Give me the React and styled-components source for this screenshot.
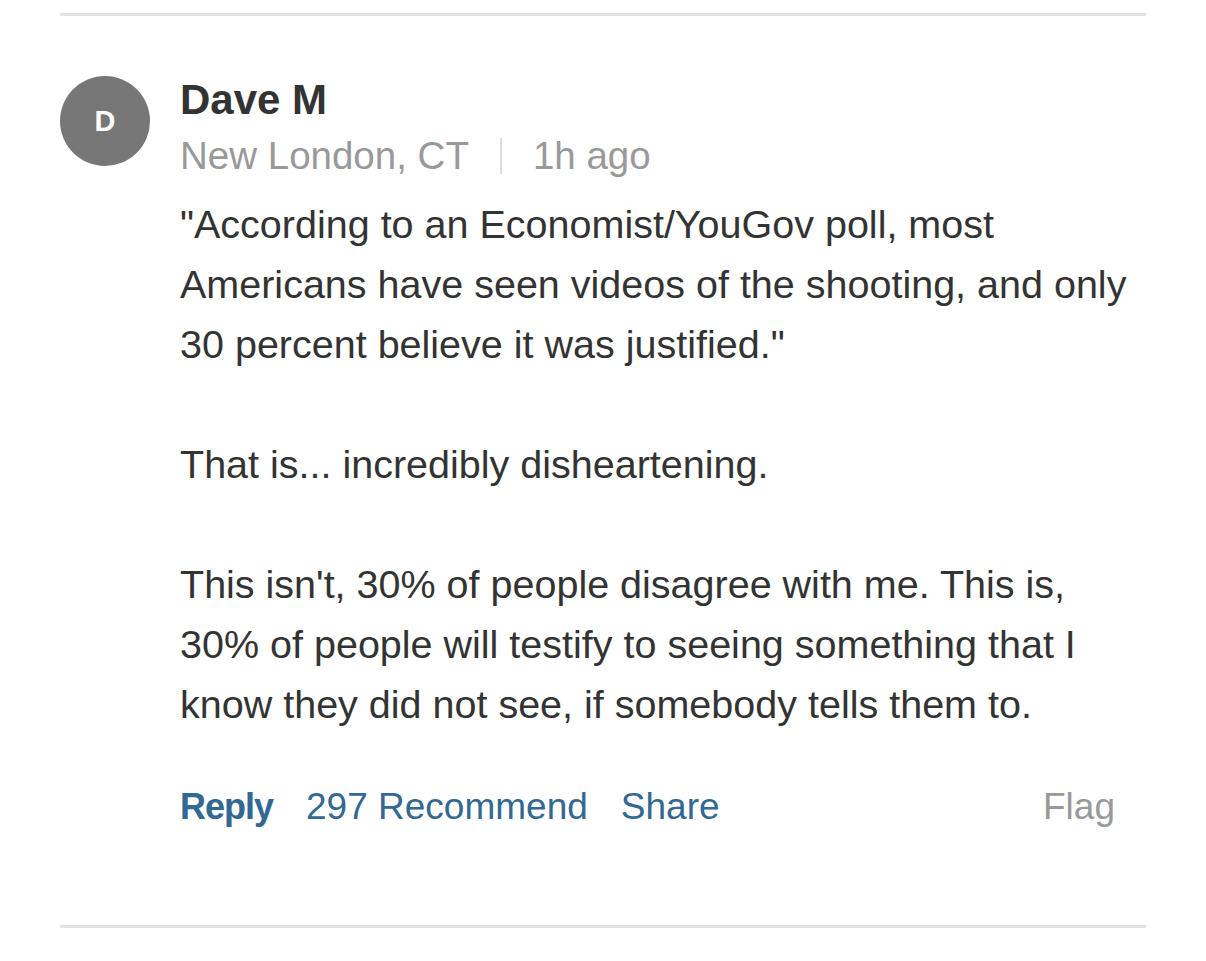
import styled, { createGlobalStyle } from "styled-components";

const GlobalStyle = createGlobalStyle`
  html, body {
    margin: 0;
    padding: 0;
    background: #fff;
  }
`;

const FONT = `"Liberation Sans", Arial, sans-serif`;

const App = () => {
  return (
    <>
      <GlobalStyle />
      <Page>
        <Comment>
          <Avatar>D</Avatar>
          <Main>
            <Name>Dave M</Name>
            <Meta>
              <span>New London, CT</span>
              <Divider />
              <span>1h ago</span>
            </Meta>
            <Body>
              <p>"According to an Economist/YouGov poll, most Americans have seen videos of the shooting, and only 30 percent believe it was justified."</p>
              <p>That is... incredibly disheartening.</p>
              <p>This isn't, 30% of people disagree with me. This is, 30% of people will testify to seeing something that I know they did not see, if somebody tells them to.</p>
            </Body>
            <Actions>
              <Action bold>Reply</Action>
              <Action>297 Recommend</Action>
              <Action>Share</Action>
              <Flag>Flag</Flag>
            </Actions>
          </Main>
        </Comment>
      </Page>
    </>
  );
};

const Page = styled.div`
  width: 1086px;
  margin: 0 0 0 60px;
  padding-top: 13px;
  font-family: ${FONT};
`;

const Comment = styled.div`
  border-top: 3px solid #e2e2e2;
  border-bottom: 3px solid #e2e2e2;
  display: flex;
  gap: 30px;
  padding: 60px 0 94px;
`;

const Avatar = styled.div`
  flex: none;
  width: 90px;
  height: 90px;
  border-radius: 50%;
  background: #777;
  color: #fff;
  font-weight: 700;
  font-size: 29px;
  display: flex;
  align-items: center;
  justify-content: center;
`;

const Main = styled.div`
  flex: 1;
  min-width: 0;
`;

const Name = styled.div`
  font-weight: 700;
  font-size: 42px;
  line-height: 48px;
  color: #333;
`;

const Meta = styled.div`
  display: flex;
  align-items: center;
  gap: 31px;
  font-size: 38.5px;
  line-height: 48px;
  color: #999;
  margin-top: 8px;
`;

const Divider = styled.span`
  width: 2px;
  height: 36px;
  background: #ddd;
`;

const Body = styled.div`
  margin-top: 14px;
  font-size: 39.5px;
  line-height: 60px;
  color: #333;

  p {
    margin: 0 0 60px;
  }
  p:last-child {
    margin-bottom: 0;
  }
`;

const Actions = styled.div`
  display: flex;
  align-items: baseline;
  gap: 33px;
  margin-top: 49px;
  font-size: 37px;
  line-height: 48px;
`;

const Action = styled.span`
  color: #326891;
  font-weight: ${({ bold }) => (bold ? 700 : 400)};
  font-size: ${({ bold }) => (bold ? "36px" : "inherit")};
  letter-spacing: ${({ bold }) => (bold ? "-1px" : "0")};
`;

const Flag = styled.span`
  margin-left: auto;
  margin-right: 31px;
  color: #999;
`;

export default App;
